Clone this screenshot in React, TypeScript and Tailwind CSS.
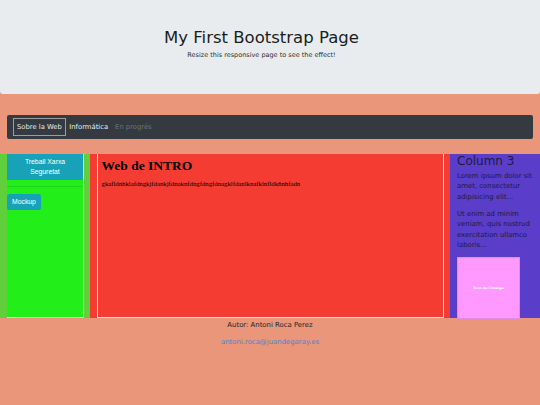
export default function App() {
  return (
    <div className="min-h-screen bg-[#e9967a] font-['DejaVu_Sans',sans-serif] text-[#212529]">
      {/* jumbotron */}
      <div className="h-[94px] bg-[#e9ecef] rounded-b-[3px] pt-[28px] pr-[17px] text-center">
        <h1 className="text-[16.5px] leading-[20px] text-[#1a1d20]">My First Bootstrap Page</h1>
        <p className="mt-[2px] text-[6.5px] leading-[10px] text-[#2a2d30]">Resize this responsive page to see the effect!</p>
      </div>

      {/* navbar */}
      <div className="mt-[21px] mx-[7px] h-[24px] bg-[#343a40] rounded-[2px] flex items-center px-[6px] text-[6.8px] leading-[10px]">
        <a className="h-[18px] flex items-center px-[3px] border border-[#9a9ea3] text-[#e8e8e8]">Sobre la Web</a>
        <a className="px-[3.5px] text-[#eeeeee]">Informática</a>
        <a className="px-[3.5px] text-[#6c757d]">En progrés</a>
      </div>

      {/* row */}
      <div className="mt-[15px] flex h-[164px]">
        <div className="w-[90px] bg-[#5fd03c] pl-[7px] pr-[6px]">
          <div className="h-full bg-[#22ee1a] border-r border-b border-[#d8f0d0] font-['Liberation_Sans',Arial,sans-serif]">
            <div className="h-[33px] border-b border-[#1fd418]">
              <div className="h-[26px] bg-[#17a2b8] text-white text-center text-[6.8px] leading-[10.4px] pt-[2.5px]">
                Treball Xarxa<br />Seguretat
              </div>
            </div>
            <div className="mt-[7px] w-[34px] h-[16px] rounded-[2.5px] bg-[#17a2b8] text-white text-[6.8px] flex items-center justify-center">
              Mockup
            </div>
          </div>
        </div>

        <div className="w-[360px] bg-[#f53c32] px-[6.5px]">
          <div className="h-full border-l border-r border-b border-[#f4e4e0] pl-[4px] pt-[3.5px] font-['Liberation_Serif','Times_New_Roman',serif] text-black">
            <h2 className="text-[13.5px] leading-[16px] font-bold">Web de INTRO</h2>
            <p className="mt-[5px] text-[6.75px] leading-[10px]">gkafldnhklafdngkjfdankjfdnaknfdngfdngfdnagklfdanlknafklnfldkñnhfadn</p>
          </div>
        </div>

        <div className="flex-1 bg-[#5a3dc8] px-[7px] text-[#1d1b3f]">
          <h3 className="text-[12px] leading-[14.4px] mb-[2.5px]">Column 3</h3>
          <p className="text-[6.9px] leading-[10.35px] mb-[6.9px]">Lorem ipsum dolor sit amet, consectetur adipisicing elit...</p>
          <p className="text-[6.9px] leading-[10.35px] mb-[6.9px]">Ut enim ad minim veniam, quis nostrud exercitation ullamco laboris...</p>
          <div className="w-[63px] h-[62px] bg-[#ff99ff] border border-[#e48be4] flex items-center justify-center text-[3.3px] font-bold text-white">
            Nom de l'imatge
          </div>
        </div>
      </div>

      {/* footer */}
      <div className="pt-[1.5px] text-center text-[6.9px] leading-[10.35px]">
        <p className="mb-[6.9px]">Autor: Antoni Roca Perez</p>
        <p><a className="text-[#4f7fd6]">antoni.roca@juandegaray.es</a></p>
      </div>
    </div>
  )
}
